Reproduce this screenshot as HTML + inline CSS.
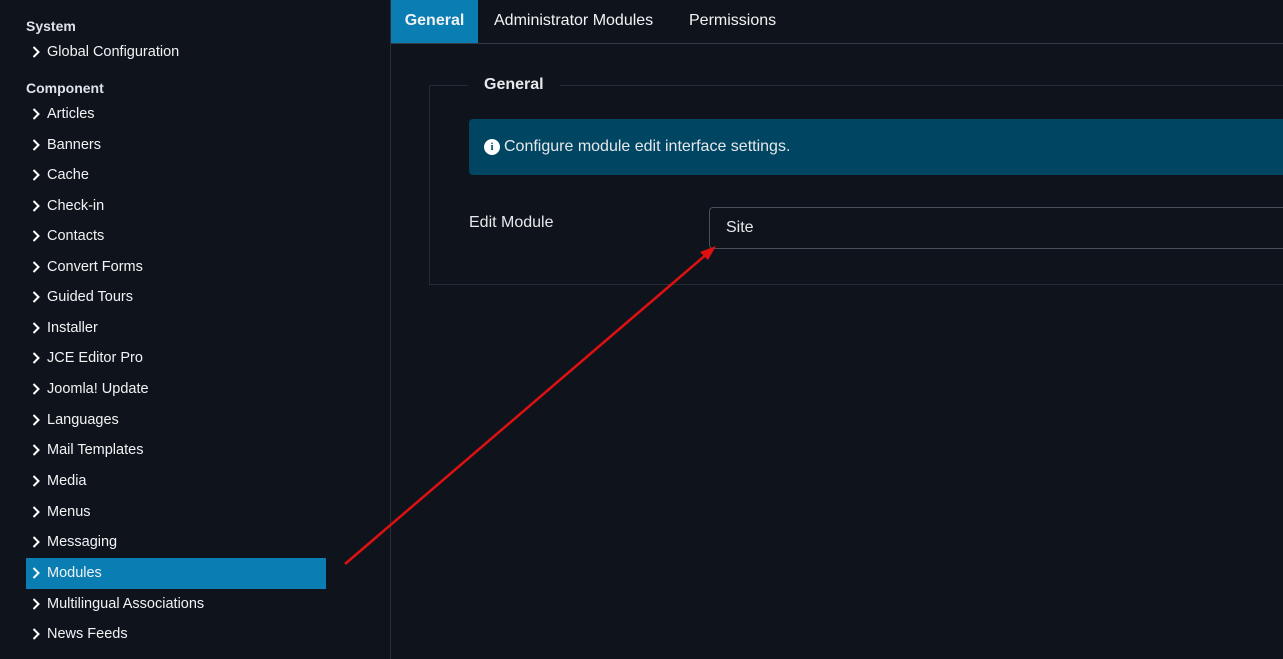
<!DOCTYPE html>
<html style="overflow:hidden;height:659px"><head><style>
*{margin:0;padding:0;box-sizing:border-box}
body{width:1283px;height:659px;overflow:hidden;background:#0f141c;font-family:"Liberation Sans",sans-serif;color:#e6e8eb;position:relative}
.side{position:absolute;left:0;top:0;width:391px;height:659px;border-right:1px solid #2a2f38;overflow:hidden}
.h{position:absolute;left:26px;font-size:14px;font-weight:bold;color:#dfe3e8}
.it{position:absolute;left:26px;width:300px;height:31px;font-size:14.5px;line-height:31px;padding-left:21px;color:#f1f3f5}
.it svg{position:absolute;left:6px;top:9px}
.it.act{background:#0a7db3}
.tabs{position:absolute;left:391px;top:0;right:0;height:44px;border-bottom:1px solid #353b45}
.tab{position:absolute;top:0;height:43px;line-height:41px;font-size:16px;color:#f1f3f5}
.fs{position:absolute;left:429px;top:85px;width:860px;height:200px;border:1px solid #262c35;border-right:none}
.leg{position:absolute;left:468px;top:75px;background:#0f141c;padding:0 16px;font-size:16px;font-weight:bold;line-height:20px}
.info{position:absolute;left:469px;top:119px;width:820px;height:56px;background:#004663;border-radius:4px 0 0 4px;font-size:16px;line-height:56px;padding-left:35px}
.info .i{position:absolute;left:15px;top:20px;width:16px;height:16px;border-radius:50%;background:#fff;color:#004663;font-size:11px;font-weight:bold;line-height:16px;text-align:center;font-family:"Liberation Serif",serif}
.lab{position:absolute;left:469px;top:214px;font-size:16px}
.inp{position:absolute;left:709px;top:207px;width:590px;height:42px;border:1px solid #4a5059;border-radius:4px;font-size:16px;line-height:40px;padding-left:16px;color:#e6e8eb}
</style></head><body>
<div class="side">
<div class="h" style="top:18px">System</div>
<div class="it" style="top:37px"><svg width="8" height="12" viewBox="0 0 8 12"><path d="M1.5 1l5 5-5 5" stroke="#fff" stroke-width="2" fill="none"/></svg>Global Configuration</div>
<div class="h" style="top:80px">Component</div>
<div class="it" style="top:99px"><svg width="8" height="12" viewBox="0 0 8 12"><path d="M1.5 1l5 5-5 5" stroke="#fff" stroke-width="2" fill="none"/></svg>Articles</div>
<div class="it" style="top:129.5px"><svg width="8" height="12" viewBox="0 0 8 12"><path d="M1.5 1l5 5-5 5" stroke="#fff" stroke-width="2" fill="none"/></svg>Banners</div>
<div class="it" style="top:160px"><svg width="8" height="12" viewBox="0 0 8 12"><path d="M1.5 1l5 5-5 5" stroke="#fff" stroke-width="2" fill="none"/></svg>Cache</div>
<div class="it" style="top:190.5px"><svg width="8" height="12" viewBox="0 0 8 12"><path d="M1.5 1l5 5-5 5" stroke="#fff" stroke-width="2" fill="none"/></svg>Check-in</div>
<div class="it" style="top:221px"><svg width="8" height="12" viewBox="0 0 8 12"><path d="M1.5 1l5 5-5 5" stroke="#fff" stroke-width="2" fill="none"/></svg>Contacts</div>
<div class="it" style="top:251.5px"><svg width="8" height="12" viewBox="0 0 8 12"><path d="M1.5 1l5 5-5 5" stroke="#fff" stroke-width="2" fill="none"/></svg>Convert Forms</div>
<div class="it" style="top:282px"><svg width="8" height="12" viewBox="0 0 8 12"><path d="M1.5 1l5 5-5 5" stroke="#fff" stroke-width="2" fill="none"/></svg>Guided Tours</div>
<div class="it" style="top:312.5px"><svg width="8" height="12" viewBox="0 0 8 12"><path d="M1.5 1l5 5-5 5" stroke="#fff" stroke-width="2" fill="none"/></svg>Installer</div>
<div class="it" style="top:343px"><svg width="8" height="12" viewBox="0 0 8 12"><path d="M1.5 1l5 5-5 5" stroke="#fff" stroke-width="2" fill="none"/></svg>JCE Editor Pro</div>
<div class="it" style="top:374px"><svg width="8" height="12" viewBox="0 0 8 12"><path d="M1.5 1l5 5-5 5" stroke="#fff" stroke-width="2" fill="none"/></svg>Joomla! Update</div>
<div class="it" style="top:404.5px"><svg width="8" height="12" viewBox="0 0 8 12"><path d="M1.5 1l5 5-5 5" stroke="#fff" stroke-width="2" fill="none"/></svg>Languages</div>
<div class="it" style="top:435px"><svg width="8" height="12" viewBox="0 0 8 12"><path d="M1.5 1l5 5-5 5" stroke="#fff" stroke-width="2" fill="none"/></svg>Mail Templates</div>
<div class="it" style="top:466px"><svg width="8" height="12" viewBox="0 0 8 12"><path d="M1.5 1l5 5-5 5" stroke="#fff" stroke-width="2" fill="none"/></svg>Media</div>
<div class="it" style="top:496.5px"><svg width="8" height="12" viewBox="0 0 8 12"><path d="M1.5 1l5 5-5 5" stroke="#fff" stroke-width="2" fill="none"/></svg>Menus</div>
<div class="it" style="top:527px"><svg width="8" height="12" viewBox="0 0 8 12"><path d="M1.5 1l5 5-5 5" stroke="#fff" stroke-width="2" fill="none"/></svg>Messaging</div>
<div class="it act" style="top:558px"><svg width="8" height="12" viewBox="0 0 8 12"><path d="M1.5 1l5 5-5 5" stroke="#fff" stroke-width="2" fill="none"/></svg>Modules</div>
<div class="it" style="top:588.5px"><svg width="8" height="12" viewBox="0 0 8 12"><path d="M1.5 1l5 5-5 5" stroke="#fff" stroke-width="2" fill="none"/></svg>Multilingual Associations</div>
<div class="it" style="top:619px"><svg width="8" height="12" viewBox="0 0 8 12"><path d="M1.5 1l5 5-5 5" stroke="#fff" stroke-width="2" fill="none"/></svg>News Feeds</div>
<div class="it" style="top:650px;height:9px"><svg width="8" height="12" viewBox="0 0 8 12"><path d="M1.5 1l5 5-5 5" stroke="#fff" stroke-width="2" fill="none"/></svg></div>
</div>
<div class="tabs">
<div class="tab" style="left:0;width:87px;background:#0a7db3;text-align:center;font-weight:bold">General</div>
<div class="tab" style="left:103px">Administrator Modules</div>
<div class="tab" style="left:298px">Permissions</div>
</div>
<div class="fs"></div>
<div class="leg">General</div>
<div class="info"><span class="i">i</span>Configure module edit interface settings.</div>
<div class="lab">Edit Module</div>
<div class="inp">Site</div>
<svg style="position:absolute;left:0;top:0" width="1283" height="659"><line x1="345" y1="564" x2="708" y2="253" stroke="#e01010" stroke-width="2.5"/><path d="M716 246 L700 252 L708 260 Z" fill="#e01010"/></svg>
</body></html>
